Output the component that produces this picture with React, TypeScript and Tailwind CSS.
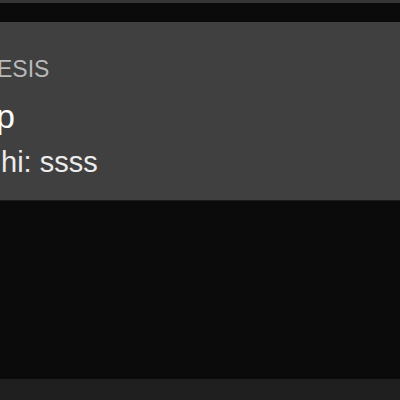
export default function App() {
  return (
    <div className="w-[400px] h-[400px] overflow-hidden flex flex-col bg-[#0b0b0b] font-['Liberation_Sans',Arial,sans-serif]">
      {/* top bar */}
      <div className="h-[3px] bg-[#363636]" />
      <div className="h-[19px] bg-[#0b0b0b]" />

      {/* card */}
      <div className="h-[178px] bg-[#404040] pt-[36px] flex flex-col overflow-hidden">
        <div className="text-[23px] leading-none text-[#b9b9b9] ml-[-3px] whitespace-nowrap">ESIS</div>
        <div className="text-[34px] leading-none text-white ml-[-4px] mt-[18px] whitespace-nowrap">p</div>
        <div className="text-[29px] leading-none text-[#ececec] ml-[1px] mt-[15px] whitespace-nowrap">hi: ssss</div>
      </div>

      {/* empty area */}
      <div className="h-[179px] bg-[#0b0b0b] border-t border-[#1c1c1c]" />

      {/* footer */}
      <div className="flex-1 bg-[#1f1f1f]" />
    </div>
  );
}
